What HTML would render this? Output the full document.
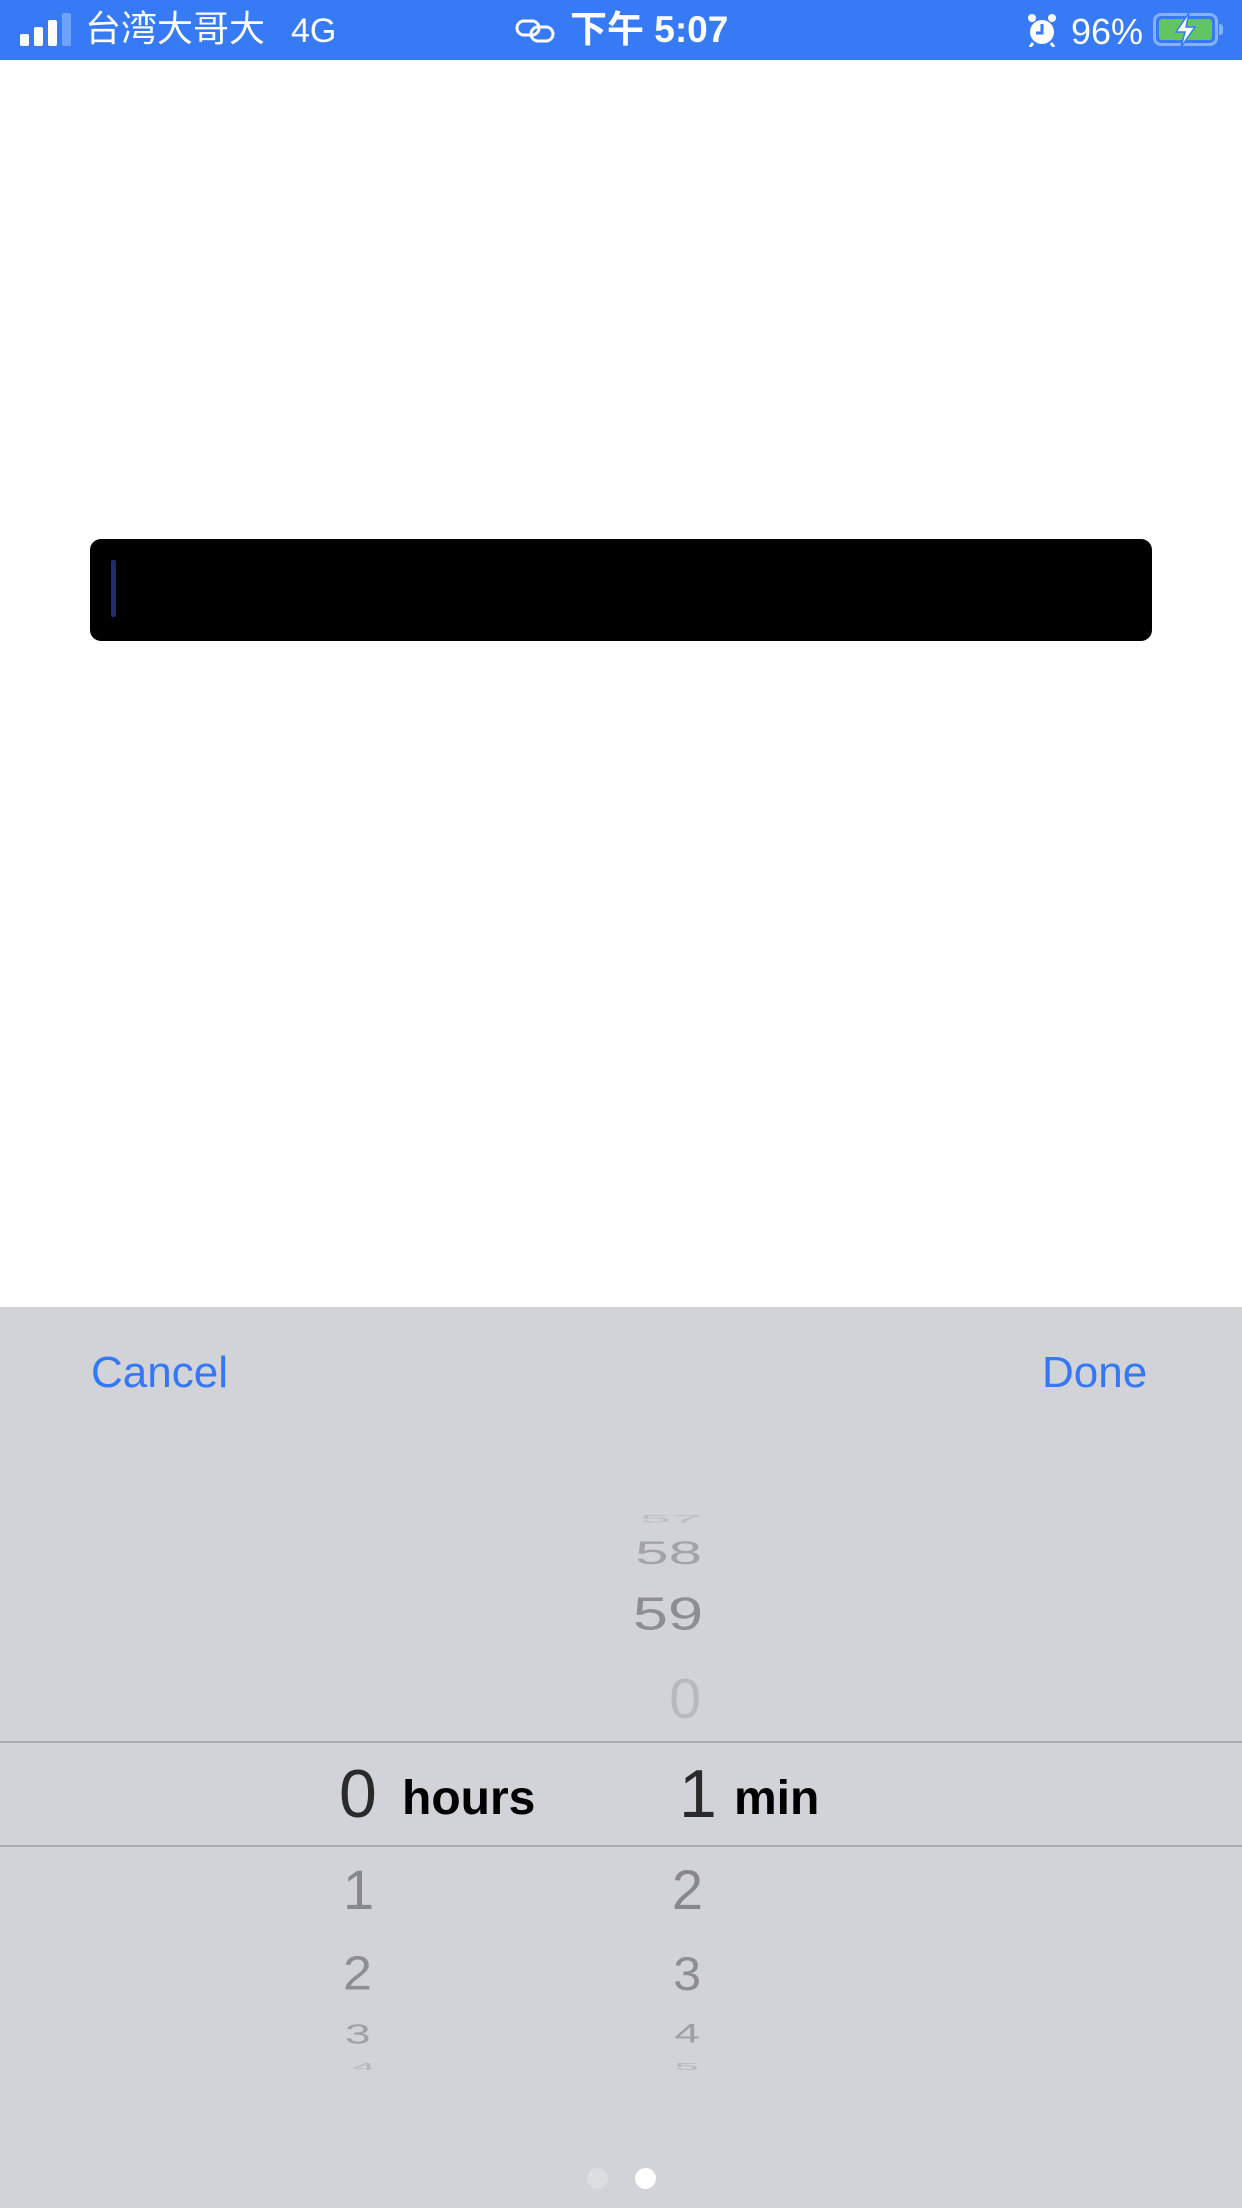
<!DOCTYPE html>
<html><head><meta charset="utf-8"><style>
*{margin:0;padding:0;box-sizing:border-box}
body{width:1242px;height:2208px;position:relative;background:#fff;overflow:hidden;font-family:"Liberation Sans","Noto Sans CJK SC",sans-serif}
.a{position:absolute;white-space:nowrap;line-height:1}
.sb{position:absolute;left:0;top:0;width:1242px;height:60px;background:#367bf5;color:#fff}
.n{position:absolute;line-height:1;transform-origin:50% 0;font-weight:normal}
</style></head><body>
<div class="sb">
  <div class="a" style="left:20px;top:34px;width:9px;height:12px;background:#fff;border-radius:2px"></div>
  <div class="a" style="left:34px;top:27px;width:9px;height:19px;background:#fff;border-radius:2px"></div>
  <div class="a" style="left:48px;top:20px;width:9px;height:26px;background:#fff;border-radius:2px"></div>
  <div class="a" style="left:62px;top:13px;width:9px;height:33px;background:#6fa2f8;border-radius:2px"></div>
  <div class="a" style="left:85px;top:11px;font-size:36px">台湾大哥大</div>
  <div class="a" style="left:291px;top:14px;font-size:34px">4G</div>
  <svg class="a" style="left:514px;top:16px" width="44" height="30" viewBox="0 0 44 30"><g fill="none" stroke="#fff" stroke-width="3"><rect x="3" y="5" width="22" height="14" rx="7"/><rect x="17" y="11" width="22" height="14" rx="7"/></g></svg>
  <div class="a" style="left:570px;top:11px;font-size:37px;font-weight:bold;letter-spacing:0px">下午 5:07</div>
  <svg class="a" style="left:1026px;top:13px" width="32" height="34" viewBox="0 0 32 34"><circle cx="16" cy="19" r="12" fill="#fff"/><path d="M16 11v9h-6" stroke="#367bf5" stroke-width="3" fill="none"/><circle cx="6" cy="5" r="4" fill="#fff"/><circle cx="26" cy="5" r="4" fill="#fff"/><path d="M7 30l-3 4M25 30l3 4" stroke="#fff" stroke-width="3"/></svg>
  <div class="a" style="left:1071px;top:14px;font-size:36px">96%</div>
  <div class="a" style="left:1153px;top:13px;width:65px;height:33px;border:3px solid #86b0f9;border-radius:8px"></div>
  <div class="a" style="left:1219px;top:24px;width:4px;height:11px;background:#86b0f9;border-radius:0 3px 3px 0"></div>
  <div class="a" style="left:1159px;top:19px;width:53px;height:21px;background:#62c462;border-radius:3px"></div>
  <svg class="a" style="left:1172px;top:12px" width="28" height="36" viewBox="0 0 28 36"><path d="M17 1L4 20h9l-4 15L23 15h-9z" fill="#fff" stroke="#367bf5" stroke-width="1.5"/></svg>
</div>

<div class="a" style="left:90px;top:539px;width:1062px;height:102px;background:#000;border-radius:11px"></div>
<div class="a" style="left:111px;top:560px;width:5px;height:57px;background:#1f2d6e;border-radius:2px"></div>

<div class="a" style="left:0;top:1307px;width:1242px;height:901px;background:#d1d3d8"></div>
<div class="a" style="left:91px;top:1351px;font-size:44px;color:#3478f6">Cancel</div>
<div class="a" style="left:1042px;top:1351px;font-size:44px;color:#3478f6">Done</div>

<div class="a" style="left:0;top:1741px;width:1242px;height:2px;background:#a8a9ae"></div>
<div class="a" style="left:0;top:1845px;width:1242px;height:2px;background:#a8a9ae"></div>

<div class="n" style="left:339px;top:1760px;font-size:68px;color:#2a2a2c">0</div>
<div class="a" style="left:402px;top:1775px;font-size:48px;font-weight:bold;color:#000">hours</div>
<div class="n" style="left:679px;top:1760px;font-size:68px;color:#2a2a2c">1</div>
<div class="a" style="left:734px;top:1775px;font-size:48px;font-weight:bold;color:#000">min</div>

<div class="n" style="left:343px;top:1862px;font-size:56px;color:#88888c">1</div>
<div class="n" style="left:343px;top:1950px;font-size:52px;color:#8e8e92;transform:scaleY(.92)">2</div>
<div class="n" style="left:345px;top:2020px;font-size:46px;color:#a0a0a4;transform:scaleY(.6)">3</div>
<div class="n" style="left:352px;top:2062px;font-size:42px;color:#b6b6ba;transform:scaleY(.23)">4</div>

<div class="n" style="right:540px;top:1513px;font-size:56px;color:#bdbdc1;transform:scaleY(.2)">57</div>
<div class="n" style="right:540px;top:1537px;font-size:60px;color:#a3a3a7;transform:scaleY(.54)">58</div>
<div class="n" style="right:539px;top:1591px;font-size:63px;color:#8e8e92;transform:scaleY(.74)">59</div>
<div class="n" style="right:541px;top:1671px;font-size:57px;color:#b8b9bd">0</div>
<div class="n" style="right:539px;top:1862px;font-size:56px;color:#88888c">2</div>
<div class="n" style="right:541px;top:1950px;font-size:50px;color:#8e8e92;transform:scaleY(.95)">3</div>
<div class="n" style="right:542px;top:2020px;font-size:46px;color:#a0a0a4;transform:scaleY(.58)">4</div>
<div class="n" style="right:543px;top:2062px;font-size:44px;color:#b6b6ba;transform:scaleY(.22)">5</div>

<div class="a" style="left:587px;top:2168px;width:21px;height:21px;border-radius:50%;background:#dcdde1"></div>
<div class="a" style="left:635px;top:2168px;width:21px;height:21px;border-radius:50%;background:#fff"></div>
</body></html>
